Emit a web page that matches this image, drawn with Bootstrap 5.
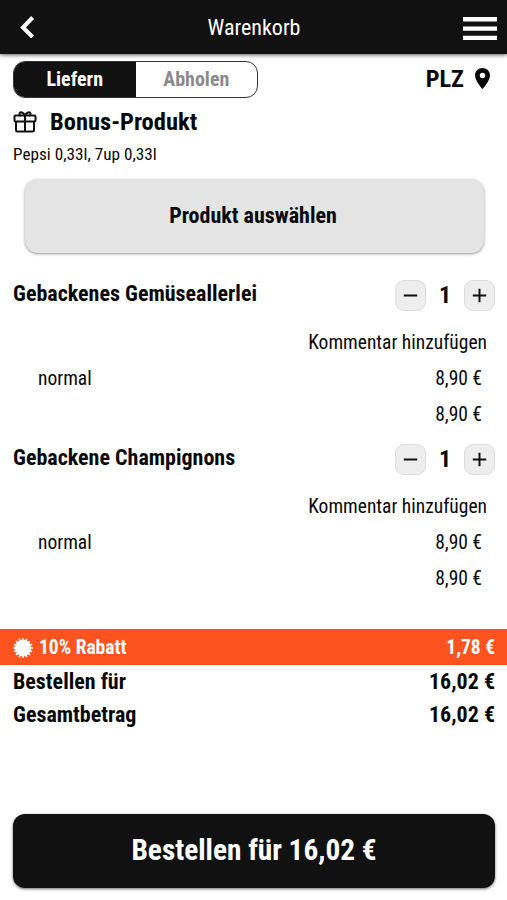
<!DOCTYPE html>
<html lang="de">
<head>
<meta charset="utf-8">
<meta name="viewport" content="width=device-width, initial-scale=1">
<title>Warenkorb</title>
<link href="https://cdn.jsdelivr.net/npm/bootstrap@5.3.0/dist/css/bootstrap.min.css" rel="stylesheet">
<style>
body{font-family:"Roboto Condensed",Roboto,"Liberation Sans",sans-serif;font-stretch:75%;font-size:19.5px;line-height:36px;color:#080808;background:#fff;height:900px;overflow:hidden}
svg{display:block;flex:none}
.topbar{height:54px;background:#111;box-shadow:0 1px 4px rgba(0,0,0,.65);padding:0 10px 0 20px}
.topbar h1{font-size:22px;font-weight:400;line-height:54px;padding:2px 0 0 10px}
.gutter{padding-left:13px;padding-right:12px}
.mode{width:245px;height:37px;border:1px solid #333;border-radius:12px;overflow:hidden;margin-top:7px}
.mode .btn{font:inherit;font-size:20px;font-weight:700;line-height:35px;padding:0;border:0;border-radius:0;color:#8b8b8b}
.mode .btn.active{background:#111;color:#fff}
.plz{font-size:24.300px;line-height:36px;margin-top:5px;gap:11px;padding-right:5px}
.bonus{font-size:24.500px;line-height:36px;gap:13px;margin-top:6px}
.hint{font-size:17.200px;line-height:28px}
.choose,.choose:hover{width:459px;height:74px;margin:11px 0 0 24.5px;background:#e4e4e4;color:#080808;border:0;border-radius:13px;font-size:22px;font-weight:700;padding:4px 2px 6px 0;box-shadow:0 1px 3px rgba(0,0,0,.42)}
.choose+section{margin-top:21px}
.item-head{height:42px;font-size:22px}
.item-name{padding-bottom:3px}
section{margin-bottom:6px}
.step{width:31px;height:31px;border:1px solid #dcdcdc;background:#eee;border-radius:9px;padding:0}
.qty{width:38px;font-size:24px;text-align:center}
.comment{padding:1px 20px 0 0;line-height:37px;margin-top:7px}
.line{padding:0 25px 0 38px;line-height:35.5px}
.rebate{background:#fd531e;height:36px;margin-top:33px;padding-top:1px}
.rebate svg{margin-right:6px}
.total{font-size:22px;line-height:33px}
.order{width:482px;height:74px;margin:83px 0 0 13px;background:#111;border-radius:12px;border:0;font-size:29.3px;font-weight:700;box-shadow:0 1px 3px rgba(0,0,0,.6)}
</style>
<script src="https://cdn.jsdelivr.net/npm/bootstrap@5.3.0/dist/js/bootstrap.bundle.min.js"></script>
</head>
<body>
<header class="topbar d-flex align-items-center justify-content-between text-white position-relative">
  <svg width="15" height="22" viewBox="0 0 15 22" fill="none" stroke="#fff" stroke-width="4"><path d="M12.6 1.500 3 11.500l9.600 9.500"/></svg>
  <h1 class="m-0">Warenkorb</h1>
  <svg class="mt-1" width="34" height="24" viewBox="0 0 34 24" fill="#fff"><path d="M0 0h34v4.400H0zM0 9.500h34v4.300H0zM0 18.800h34v4.300H0z"/></svg>
</header>
<main>
  <div class="gutter d-flex justify-content-between">
    <div class="mode d-flex">
      <button class="btn active w-50">Liefern</button><button class="btn w-50">Abholen</button>
    </div>
    <div class="plz d-flex align-items-center fw-bold"><span>PLZ</span>
      <svg width="15" height="21" viewBox="0 0 15 21"><path fill="#080808" fill-rule="evenodd" d="M7.500 0C3.300 0 0 3.200 0 7.400 0 12.700 7.500 21 7.500 21S15 12.700 15 7.400C15 3.200 11.700 0 7.500 0zm0 4.800a2.700 2.700 0 1 1 0 5.400 2.700 2.700 0 0 1 0-5.400z"/></svg>
    </div>
  </div>
  <h2 class="bonus gutter d-flex align-items-center fw-bold mb-0">
    <svg width="24" height="22" viewBox="0 0 24 22" fill="none" stroke="#111" stroke-width="2"><rect x="1.500" y="4.500" width="21" height="6" rx="1"/><path d="M3 10.500v8.500q0 1.500 1.500 1.500h15q1.500 0 1.500-1.500v-8.500M12 4.500v16M12 4.500C10.500 1.300 7 .2 6.500 2.500 6.300 3.700 7 4.500 8 4.500M12 4.500c1.500-3.200 5-4.300 5.500-2 .2 1.200-.5 2-1.500 2"/></svg>
    <span>Bonus-Produkt</span>
  </h2>
  <div class="hint gutter">Pepsi 0,33l, 7up 0,33l</div>
  <button class="choose btn d-block">Produkt auswählen</button>

  <section>
    <div class="item-head gutter d-flex justify-content-between align-items-center fw-bold">
      <span class="item-name">Gebackenes Gemüseallerlei</span>
      <div class="d-flex align-items-center">
        <button class="step btn d-flex align-items-center justify-content-center"><svg width="15" height="15" viewBox="0 0 15 15" stroke="#111" stroke-width="2"><path d="M.8 7.500h13.400"/></svg></button>
        <span class="qty">1</span>
        <button class="step btn d-flex align-items-center justify-content-center"><svg width="15" height="15" viewBox="0 0 15 15" stroke="#111" stroke-width="2"><path d="M.8 7.500h13.400M7.500.8v13.400"/></svg></button>
      </div>
    </div>
    <div class="comment text-end">Kommentar hinzufügen</div>
    <div class="line d-flex justify-content-between"><span>normal</span><span>8,90 €</span></div>
    <div class="line text-end">8,90 €</div>
  </section>
  <section>
    <div class="item-head gutter d-flex justify-content-between align-items-center fw-bold">
      <span class="item-name">Gebackene Champignons</span>
      <div class="d-flex align-items-center">
        <button class="step btn d-flex align-items-center justify-content-center"><svg width="15" height="15" viewBox="0 0 15 15" stroke="#111" stroke-width="2"><path d="M.8 7.500h13.400"/></svg></button>
        <span class="qty">1</span>
        <button class="step btn d-flex align-items-center justify-content-center"><svg width="15" height="15" viewBox="0 0 15 15" stroke="#111" stroke-width="2"><path d="M.8 7.500h13.400M7.500.8v13.400"/></svg></button>
      </div>
    </div>
    <div class="comment text-end">Kommentar hinzufügen</div>
    <div class="line d-flex justify-content-between"><span>normal</span><span>8,90 €</span></div>
    <div class="line text-end">8,90 €</div>
  </section>

  <div class="rebate gutter d-flex align-items-center justify-content-between fw-bold text-white">
    <span class="d-flex align-items-center"><svg width="20" height="20" viewBox="-10 -10 20 20"><circle r="8.200" fill="#fff"/><circle r="8.700" fill="none" stroke="#fff" stroke-width="2.200" pathLength="32" stroke-dasharray="1 1" stroke-dashoffset=".5"/></svg>10% Rabatt</span>
    <span>1,78 €</span>
  </div>
  <div class="total gutter d-flex justify-content-between fw-bold"><span>Bestellen für</span><span>16,02 €</span></div>
  <div class="total gutter d-flex justify-content-between fw-bold"><span>Gesamtbetrag</span><span>16,02 €</span></div>
  <button class="order btn d-block text-white">Bestellen für 16,02 €</button>
</main>
</body>
</html>
